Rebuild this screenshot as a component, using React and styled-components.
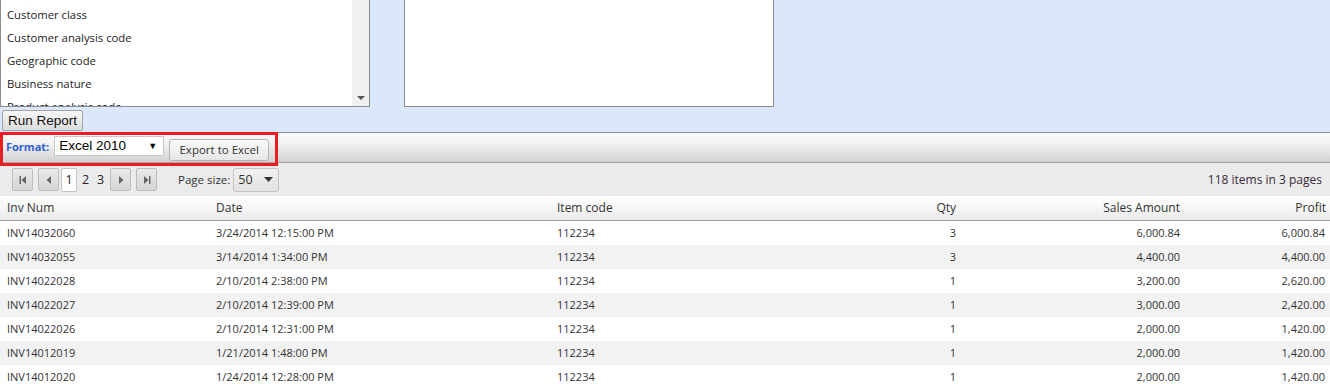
import styled, { createGlobalStyle } from 'styled-components';

const GlobalStyle = createGlobalStyle`
  body {
    margin: 0;
    font-family: "Open Sans", "Noto Sans", sans-serif;
    color: #333;
    background: #fff;
  }
`;

const fields = [
    'Customer class',
    'Customer analysis code',
    'Geographic code',
    'Business nature',
    'Product analysis code',
];

const rows = [
    ['INV14032060', '3/24/2014 12:15:00 PM', '112234', '3', '6,000.84', '6,000.84'],
    ['INV14032055', '3/14/2014 1:34:00 PM', '112234', '3', '4,400.00', '4,400.00'],
    ['INV14022028', '2/10/2014 2:38:00 PM', '112234', '1', '3,200.00', '2,620.00'],
    ['INV14022027', '2/10/2014 12:39:00 PM', '112234', '1', '3,000.00', '2,420.00'],
    ['INV14022026', '2/10/2014 12:31:00 PM', '112234', '1', '2,000.00', '1,420.00'],
    ['INV14012019', '1/21/2014 1:48:00 PM', '112234', '1', '2,000.00', '1,420.00'],
    ['INV14012020', '1/24/2014 12:28:00 PM', '112234', '1', '2,000.00', '1,420.00'],
];

const columns = [
    { title: 'Inv Num', align: 'left' },
    { title: 'Date', align: 'left' },
    { title: 'Item code', align: 'left' },
    { title: 'Qty', align: 'right' },
    { title: 'Sales Amount', align: 'right' },
    { title: 'Profit', align: 'right' },
];

const PagerIcon = ({ kind }) => (
    <svg width="10" height="10" viewBox="0 0 10 10">
        {kind === 'first' && <><rect x="1.5" y="1" width="1.5" height="8" fill="#666" /><path d="M8 1 L3.5 5 L8 9 Z" fill="#666" /></>}
        {kind === 'prev' && <path d="M7 1 L2.5 5 L7 9 Z" fill="#666" />}
        {kind === 'next' && <path d="M3 1 L7.5 5 L3 9 Z" fill="#666" />}
        {kind === 'last' && <><path d="M2 1 L6.5 5 L2 9 Z" fill="#666" /><rect x="7" y="1" width="1.5" height="8" fill="#666" /></>}
    </svg>
);

const App = () => {
    return (
        <>
            <GlobalStyle />
            <Page>
                <CriteriaPanel>
                    <BoxRow>
                        <ListBox>
                            <ListItems>
                                {fields.map((f) => <ListItem key={f}>{f}</ListItem>)}
                            </ListItems>
                            <ScrollTrack>
                                <ScrollArrow />
                            </ScrollTrack>
                        </ListBox>
                        <EmptyBox />
                    </BoxRow>
                    <RunButton>Run Report</RunButton>
                </CriteriaPanel>

                <Toolbar>
                    <FormatLabel>Format:</FormatLabel>
                    <FormatSelect>
                        <span>Excel 2010</span>
                        <SmallArrow>▼</SmallArrow>
                    </FormatSelect>
                    <ExportButton>Export to Excel</ExportButton>
                    <Highlight />
                </Toolbar>

                <Pager>
                    <PagerButton><PagerIcon kind="first" /></PagerButton>
                    <PagerButton><PagerIcon kind="prev" /></PagerButton>
                    <PageNumbers>
                        <PageNum $current>1</PageNum>
                        <PageNum>2</PageNum>
                        <PageNum>3</PageNum>
                    </PageNumbers>
                    <PagerButton><PagerIcon kind="next" /></PagerButton>
                    <PagerButton><PagerIcon kind="last" /></PagerButton>
                    <PageSizeLabel>Page size:</PageSizeLabel>
                    <PageSizeSelect>
                        <span>50</span>
                        <svg width="9" height="5" viewBox="0 0 9 5"><path d="M0 0 H9 L4.5 5 Z" fill="#333" /></svg>
                    </PageSizeSelect>
                    <PagerInfo>118 items in 3 pages</PagerInfo>
                </Pager>

                <Grid>
                    <HeaderRow>
                        {columns.map((c) => <HeaderCell key={c.title} $align={c.align}>{c.title}</HeaderCell>)}
                    </HeaderRow>
                    {rows.map((r, i) => (
                        <DataRow key={r[0]} $alt={i % 2 === 1}>
                            {r.map((v, j) => <Cell key={j} $align={columns[j].align}>{v}</Cell>)}
                        </DataRow>
                    ))}
                </Grid>
            </Page>
        </>
    );
}

export default App


const Page = styled.div`
    width: 1330px;
    height: 384px;
    overflow: hidden;
`;

const CriteriaPanel = styled.div`
    background: #dae7fc;
    height: 132px;
    border-bottom: 1px solid #8f8f8f;
    display: flex;
    flex-direction: column;
    align-items: flex-start;
`;

const BoxRow = styled.div`
    display: flex;
    gap: 34px;
`;

const ListBox = styled.div`
    width: 368px;
    height: 106px;
    background: #fff;
    border: 1px solid #8c8c8c;
    border-top: none;
    display: flex;
    overflow: hidden;
`;

const ListItems = styled.div`
    flex: 1;
    padding-top: 3px;
    overflow: hidden;
`;

const ListItem = styled.div`
    height: 23px;
    line-height: 23px;
    padding-left: 6px;
    font-size: 11.3px;
    color: #222;
    white-space: nowrap;
`;

const ScrollTrack = styled.div`
    width: 17px;
    background: #f0f0f0;
    display: flex;
    align-items: flex-end;
    justify-content: center;
    padding-bottom: 6px;
    box-sizing: border-box;
`;

const ScrollArrow = styled.div`
    width: 0;
    height: 0;
    border-left: 4px solid transparent;
    border-right: 4px solid transparent;
    border-top: 4px solid #555;
`;

const EmptyBox = styled.div`
    width: 368px;
    height: 106px;
    background: #fff;
    border: 1px solid #8c8c8c;
    border-top: none;
`;

const RunButton = styled.button`
    margin: 3px 0 0 2px;
    height: 21px;
    width: 81px;
    padding: 0;
    font-family: "Liberation Sans", Arial, sans-serif;
    font-size: 13.5px;
    color: #111;
    background: linear-gradient(#f7f7f7, #dcdcdc);
    border: 1px solid #a3a3a3;
    border-radius: 2px;
`;

const Toolbar = styled.div`
    position: relative;
    height: 29px;
    display: flex;
    align-items: center;
    padding-left: 6px;
    background: linear-gradient(#fbfbfb, #f0f0f0 40%, #d2d2d2);
    border-bottom: 1px solid #a6a6a6;
`;

const FormatLabel = styled.span`
    font-size: 11px;
    font-weight: 700;
    color: #2e5fd8;
    margin-right: 5px;
    margin-top: -3px;
`;

const FormatSelect = styled.div`
    width: 110px;
    height: 20px;
    box-sizing: border-box;
    margin-top: -4px;
    background: #fff;
    border: 1px solid #c8c8c8;
    display: flex;
    align-items: center;
    justify-content: space-between;
    padding: 0 6px 0 4px;
    font-family: "Liberation Sans", Arial, sans-serif;
    font-size: 13.5px;
    color: #000;
`;

const SmallArrow = styled.span`
    font-size: 9px;
    color: #000;
`;

const ExportButton = styled.button`
    margin: 4px 0 0 5px;
    width: 100px;
    height: 22px;
    padding: 0;
    font-family: "Open Sans", sans-serif;
    font-size: 11.5px;
    color: #333;
    background: linear-gradient(#fafafa, #e6e6e6);
    border: 1px solid #b4b4b4;
    border-radius: 3px;
`;

const Highlight = styled.div`
    position: absolute;
    left: 0;
    top: -1px;
    width: 278px;
    height: 34px;
    box-sizing: border-box;
    border: 3px solid #ec1c24;
    pointer-events: none;
`;

const Pager = styled.div`
    height: 33px;
    background: #ebebeb;
    display: flex;
    align-items: center;
    padding: 0 8px 0 12px;
    font-size: 12px;
`;

const PagerButton = styled.div`
    width: 21px;
    height: 23px;
    box-sizing: border-box;
    margin-right: 5px;
    border: 1px solid #bdbdbd;
    border-radius: 2px;
    background: linear-gradient(#e9e9e9, #d6d6d6);
    display: flex;
    align-items: center;
    justify-content: center;
`;

const PageNumbers = styled.div`
    display: flex;
    align-items: center;
    gap: 2px;
    margin: 0 3px 0 -3px;
`;

const PageNum = styled.div`
    min-width: ${(p) => (p.$current ? '16px' : '13px')};
    height: 24px;
    box-sizing: border-box;
    display: flex;
    align-items: center;
    justify-content: center;
    font-size: 12.5px;
    color: #2a1a2a;
    background: ${(p) => (p.$current ? '#fff' : 'transparent')};
    border: ${(p) => (p.$current ? '1px solid #c2c2c2' : 'none')};
    border-radius: 2px;
`;

const PageSizeLabel = styled.span`
    margin-left: 16px;
    margin-right: 3px;
    font-size: 11.5px;
`;

const PageSizeSelect = styled.div`
    width: 46px;
    height: 24px;
    box-sizing: border-box;
    background: linear-gradient(#f2f2f2, #e2e2e2);
    border: 1px solid #c2c2c2;
    border-radius: 3px;
    display: flex;
    align-items: center;
    justify-content: space-between;
    padding: 0 5px 0 4px;
    font-size: 12.5px;
`;

const PagerInfo = styled.span`
    margin-left: auto;
    font-size: 12px;
    color: #3a2a3a;
`;

const Grid = styled.div`
    display: flex;
    flex-direction: column;
`;

const cols = '209px 341px 213px 200px 224px 1fr';

const HeaderRow = styled.div`
    display: grid;
    grid-template-columns: ${cols};
    height: 24px;
    background: linear-gradient(#ffffff, #f6f6f6 50%, #e9e9e9);
    border-bottom: 1px solid #9e9e9e;
`;

const HeaderCell = styled.div`
    padding: 0 7px;
    line-height: 24px;
    font-size: 12px;
    color: #333;
    text-align: ${(p) => p.$align};
    &:last-child { padding-right: 4px; }
`;

const DataRow = styled.div`
    display: grid;
    grid-template-columns: ${cols};
    height: 24px;
    background: ${(p) => (p.$alt ? '#f2f2f2' : '#fff')};
`;

const Cell = styled.div`
    padding: 0 7px;
    line-height: 23px;
    font-size: 11px;
    color: #333;
    text-align: ${(p) => p.$align};
    white-space: nowrap;
    &:last-child { padding-right: 5px; }
`;
